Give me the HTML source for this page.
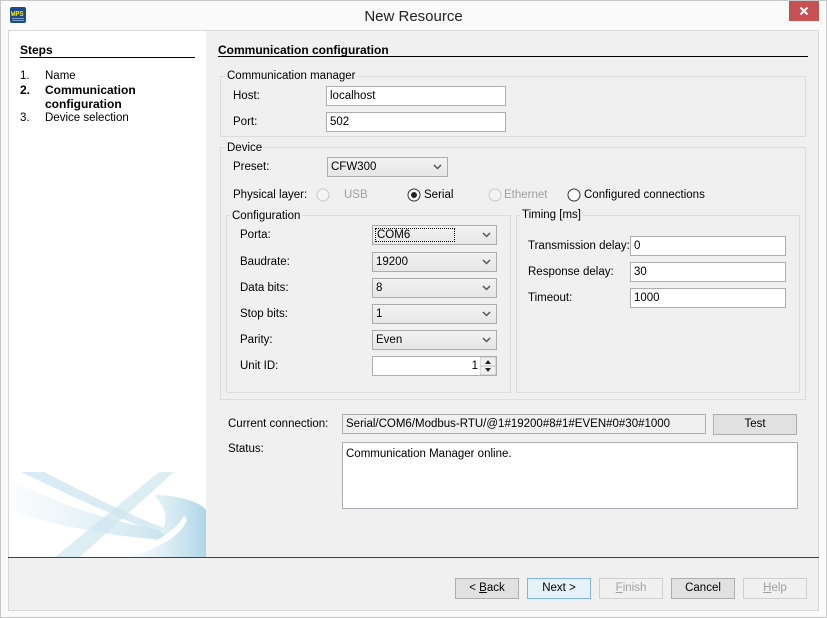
<!DOCTYPE html>
<html><head><meta charset="utf-8"><style>
*{box-sizing:border-box;margin:0;padding:0}
body{width:827px;height:618px;background:#fff;font-family:"Liberation Sans",sans-serif;font-size:11.5px;color:#000;position:relative;overflow:hidden}
.a{position:absolute;white-space:nowrap;line-height:14px}
.b{font-weight:bold;font-size:12px}
.in{position:absolute;background:#fff;border:1px solid #abadb3;height:20px;padding:2px 0 0 3px;line-height:14px;white-space:nowrap}
.sel{position:absolute;background:linear-gradient(#f2f2f2,#e6e6e6);border:1px solid #acacac;height:20px;padding:2px 0 0 3px;line-height:14px}
.sel svg{position:absolute;right:5px;top:6px}
.gb{position:absolute;border:1px solid #dcdcdc}
.gl{position:absolute;background:#f0f0f0;padding:0 2px;line-height:14px;white-space:nowrap}
.btn{position:absolute;height:21px;border:1px solid #adadad;background:#e1e1e1;text-align:center;line-height:19px;top:578px;width:64px}
.dis{color:#a0a0a0;border-color:#d0d0d0;background:#f0f0f0}
</style></head><body>
<div style="position:absolute;left:0;top:0;width:827px;height:618px;border:1px solid #c8c8c8;background:#fafafa"></div>
<svg class="a" style="left:10px;top:7px" width="16" height="16"><rect x="0" y="0" width="16" height="16" rx="2" fill="#1e4a8a"/><text x="1" y="9" font-size="7" font-family="Liberation Mono" fill="#ffe800" font-weight="bold">WPS</text><rect x="2" y="11" width="12" height="1" fill="#7aa0d0"/><rect x="2" y="13" width="12" height="1" fill="#7aa0d0"/></svg>
<div class="a" style="left:0;width:827px;top:8px;text-align:center;font-size:15px;line-height:18px;color:#222">New Resource</div>
<div style="position:absolute;left:789px;top:1px;width:30px;height:20px;background:#c75050"></div>
<svg class="a" style="left:799px;top:6px" width="10" height="10"><path d="M1.5 1.5L8.5 8.5M8.5 1.5L1.5 8.5" stroke="#fff" stroke-width="2"/></svg>
<div style="position:absolute;left:8px;top:30px;width:811px;height:581px;border:1px solid #d8d8d8;background:#f0f0f0"></div>
<div style="position:absolute;left:9px;top:31px;width:197px;height:527px;background:#fff"></div>
<svg style="position:absolute;left:9px;top:470px" width="197" height="88">
<defs><linearGradient id="g1" x1="0" x2="1"><stop offset="0" stop-color="#d6ebf3" stop-opacity=".2"/><stop offset="1" stop-color="#aed6e6"/></linearGradient></defs>
<path d="M2 10 C60 40 120 55 150 60 L160 70 C110 68 40 55 2 40Z" fill="url(#g1)" opacity=".7"/>
<path d="M12 2 L35 2 C80 25 120 45 155 58 L150 64 C110 48 60 25 12 2Z" fill="#cfe6f0" opacity=".8"/>
<path d="M45 88 L150 2 L165 2 L70 88Z" fill="#cfe6f0" opacity=".7"/>
<path d="M145 25 C175 25 195 35 197 40 L197 88 L120 88 C150 75 170 50 145 25Z" fill="url(#g1)"/>
<path d="M100 88 C140 78 170 60 175 45 L178 50 C170 70 140 82 115 88Z" fill="#fff"/>
</svg>
<div style="position:absolute;left:8px;top:557px;width:811px;height:1px;background:#404040"></div>
<div class="a b" style="left:20px;top:43px">Steps</div>
<div style="position:absolute;left:20px;top:57px;width:175px;height:1px;background:#000"></div>
<div class="a" style="left:20px;top:69px">1.</div><div class="a" style="left:45px;top:69px">Name</div>
<div class="a b" style="left:20px;top:83px">2.</div><div class="a b" style="left:45px;top:83px">Communication</div>
<div class="a b" style="left:45px;top:97px">configuration</div>
<div class="a" style="left:20px;top:111px">3.</div><div class="a" style="left:45px;top:111px">Device selection</div>
<div class="a b" style="left:218px;top:43px">Communication configuration</div>
<div style="position:absolute;left:218px;top:56px;width:590px;height:1px;background:#000"></div>
<div class="gb" style="left:220px;top:76px;width:586px;height:61px"></div>
<div class="gl" style="left:225px;top:69px">Communication manager</div>
<div class="a" style="left:233px;top:89px">Host:</div><div class="in" style="left:326px;top:86px;width:180px">localhost</div>
<div class="a" style="left:233px;top:115px">Port:</div><div class="in" style="left:326px;top:112px;width:180px">502</div>
<div class="gb" style="left:220px;top:147px;width:586px;height:253px"></div>
<div class="gl" style="left:225px;top:141px">Device</div>
<div class="a" style="left:233px;top:160px">Preset:</div>
<div class="sel" style="left:327px;top:157px;width:121px">CFW300<svg width="9" height="6"><path d="M1 1L4.5 4.5L8 1" stroke="#555" stroke-width="1.5" fill="none"/></svg></div>
<div class="a" style="left:233px;top:188px">Physical layer:</div>
<svg style="position:absolute;left:316px;top:188px" width="400" height="15">
<circle cx="7" cy="7" r="6" fill="#f4f4f4" stroke="#c8c8c8"/>
<circle cx="98" cy="7" r="6" fill="#fff" stroke="#333"/><circle cx="98" cy="7" r="3" fill="#222"/>
<circle cx="179" cy="7" r="6" fill="#f4f4f4" stroke="#c8c8c8"/>
<circle cx="258" cy="7" r="6" fill="#fff" stroke="#333"/>
</svg>
<div class="a" style="left:344px;top:188px;color:#a0a0a0">USB</div>
<div class="a" style="left:424px;top:188px">Serial</div>
<div class="a" style="left:504px;top:188px;color:#a0a0a0">Ethernet</div>
<div class="a" style="left:584px;top:188px">Configured connections</div>
<div class="gb" style="left:226px;top:215px;width:285px;height:178px"></div>
<div class="gl" style="left:230px;top:209px">Configuration</div>
<div class="gb" style="left:516px;top:215px;width:284px;height:178px"></div>
<div class="gl" style="left:520px;top:208px">Timing [ms]</div>
<div class="a" style="left:240px;top:228px">Porta:</div>
<div class="sel" style="left:372px;top:225px;width:125px"><span style="outline:1px dotted #000;padding:0 44px 0 1px">COM6</span><svg width="9" height="6"><path d="M1 1L4.5 4.5L8 1" stroke="#555" stroke-width="1.5" fill="none"/></svg></div>
<div class="a" style="left:240px;top:255px">Baudrate:</div>
<div class="sel" style="left:372px;top:252px;width:125px">19200<svg width="9" height="6"><path d="M1 1L4.5 4.5L8 1" stroke="#555" stroke-width="1.5" fill="none"/></svg></div>
<div class="a" style="left:240px;top:281px">Data bits:</div>
<div class="sel" style="left:372px;top:278px;width:125px">8<svg width="9" height="6"><path d="M1 1L4.5 4.5L8 1" stroke="#555" stroke-width="1.5" fill="none"/></svg></div>
<div class="a" style="left:240px;top:307px">Stop bits:</div>
<div class="sel" style="left:372px;top:304px;width:125px">1<svg width="9" height="6"><path d="M1 1L4.5 4.5L8 1" stroke="#555" stroke-width="1.5" fill="none"/></svg></div>
<div class="a" style="left:240px;top:333px">Parity:</div>
<div class="sel" style="left:372px;top:330px;width:125px">Even<svg width="9" height="6"><path d="M1 1L4.5 4.5L8 1" stroke="#555" stroke-width="1.5" fill="none"/></svg></div>
<div class="a" style="left:240px;top:359px">Unit ID:</div>
<div class="in" style="left:372px;top:356px;width:125px;text-align:right;padding-right:18px">1</div>
<svg style="position:absolute;left:480px;top:357px" width="16" height="18"><rect x="0" y="0" width="16" height="18" fill="#f0f0f0" stroke="#c0c0c0"/><path d="M5 7L8 3L11 7Z M5 11L8 15L11 11Z" fill="#222"/><line x1="1" y1="9" x2="15" y2="9" stroke="#c0c0c0"/></svg>
<div class="a" style="left:528px;top:239px">Transmission delay:</div><div class="in" style="left:630px;top:236px;width:156px">0</div>
<div class="a" style="left:528px;top:265px">Response delay:</div><div class="in" style="left:630px;top:262px;width:156px">30</div>
<div class="a" style="left:528px;top:291px">Timeout:</div><div class="in" style="left:630px;top:288px;width:156px">1000</div>
<div class="a" style="left:228px;top:417px">Current connection:</div>
<div class="in" style="left:342px;top:414px;width:364px;background:#f0f0f0;border-color:#adadad">Serial/COM6/Modbus-RTU/@1#19200#8#1#EVEN#0#30#1000</div>
<div class="btn" style="left:713px;top:414px;width:84px;height:21px">Test</div>
<div class="a" style="left:228px;top:442px">Status:</div>
<div class="in" style="left:342px;top:442px;width:456px;height:67px;padding-top:4px">Communication Manager online.</div>
<div class="btn" style="left:455px">&lt; <u>B</u>ack</div>
<div class="btn" style="left:527px;background:#e5f1fb;border-color:#7eb4ea">Next &gt;</div>
<div class="btn dis" style="left:599px"><u>F</u>inish</div>
<div class="btn" style="left:671px">Cancel</div>
<div class="btn dis" style="left:743px"><u>H</u>elp</div>
</body></html>
